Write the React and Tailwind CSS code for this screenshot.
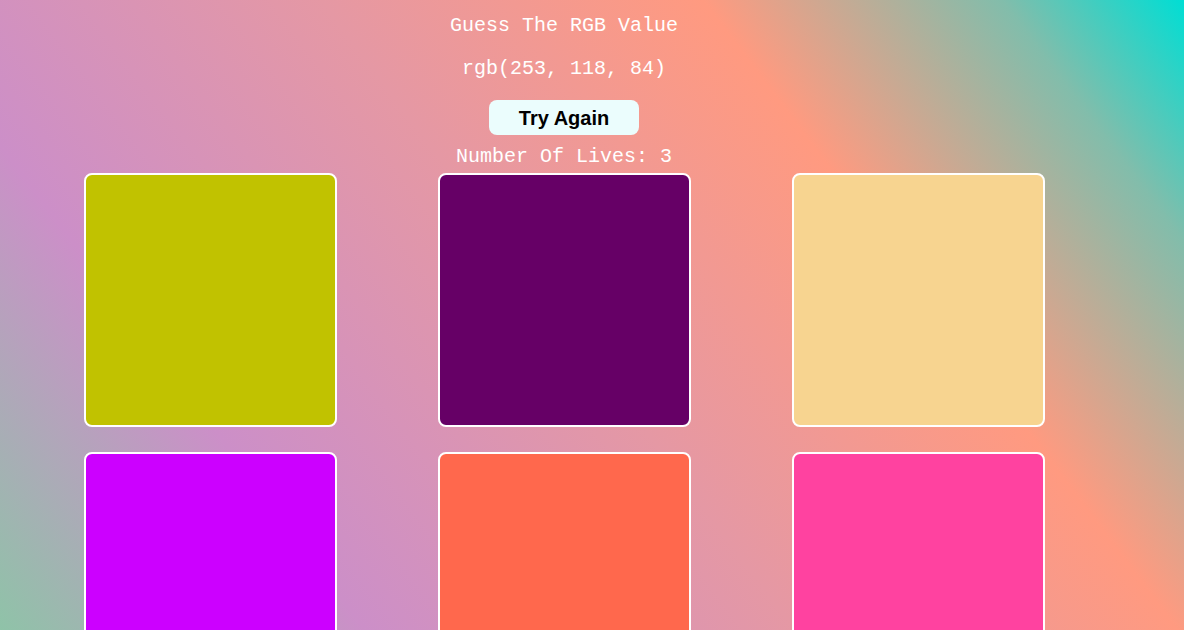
export default function App() {
  const cards = ["#c1c200", "#660066", "#f7d490", "#cc00ff", "#ff684d", "#ff42a0"];
  return (
    <div
      className="min-h-screen w-full bg-fixed bg-[linear-gradient(53deg,#8fc3a8_0%,#cc8fc8_22%,#e598a4_48%,#ff9a80_71%,#82bdab_89%,#00ded4_100%)]"
      style={{ fontFamily: '"Liberation Mono", "Courier New", monospace' }}
    >
      <div className="w-[1128px] flex flex-col items-center pt-[15px]">
        <div className="text-white text-[20px] leading-[22px]">Guess The RGB Value</div>
        <div className="text-white text-[20px] leading-[22px] mt-[21px]">rgb(253, 118, 84)</div>
        <button
          className="mt-[20px] w-[150px] h-[35px] rounded-[8px] bg-[#ebfdfd] text-black font-bold text-[20px] flex items-center justify-center"
          style={{ fontFamily: '"Liberation Sans", Arial, sans-serif' }}
        >
          Try Again
        </button>
        <div className="text-white text-[20px] leading-[22px] mt-[11px]">Number Of Lives: 3</div>
        <div className="mt-[5px] grid grid-cols-[253px_253px_253px] gap-x-[101px] gap-y-[25px] pb-6">
          {cards.map((c) => (
            <div
              key={c}
              className="w-[253px] h-[254px] border-2 border-white rounded-[8px]"
              style={{ backgroundColor: c }}
            />
          ))}
        </div>
      </div>
    </div>
  );
}
